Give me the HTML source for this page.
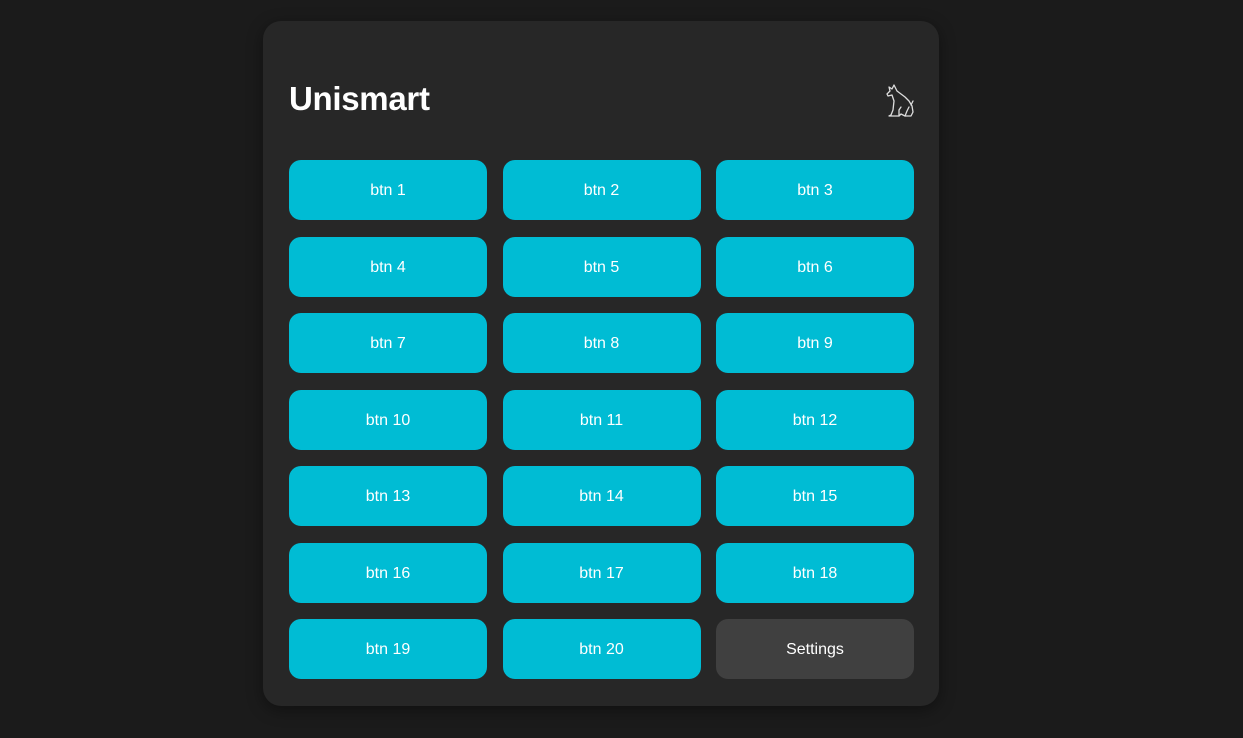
<!DOCTYPE html>
<html><head><style>
html,body{margin:0;padding:0;background:#1b1b1b;width:1243px;height:738px;overflow:hidden;font-family:"Liberation Sans",sans-serif}
.card{position:absolute;left:263px;top:21px;width:676px;height:685px;background:#272727;border-radius:18px;box-shadow:0 4px 16px rgba(0,0,0,.4)}
h1{position:absolute;left:26px;top:58px;margin:0;color:#fff;font-size:33px;line-height:40px;font-weight:bold;font-family:"Liberation Sans",sans-serif;letter-spacing:-0.3px}
.icon{position:absolute;left:620px;top:62px}
.grid{position:absolute;left:26px;top:139px;display:grid;grid-template-columns:198px 198px 198px;column-gap:15.5px;row-gap:16.5px}
.b{height:60px;box-sizing:border-box;padding-top:2px;background:#00bcd4;border-radius:12px;color:#fff;font-size:16px;display:flex;align-items:center;justify-content:center}
.s{background:#404040}
</style></head><body>
<div class="card">
<h1>Unismart</h1>
<svg class="icon" width="32" height="36" viewBox="0 0 32 36" fill="none" stroke="#ddd" stroke-width="1.3" stroke-linejoin="round" stroke-linecap="round">
<path d="M6 4 L7 8 L4 11 L5 13 L9 12 L11 18 L10 27 L8 32 L6 33 L16 33 L18 31 L22 33 L28 33 L30 29 L29 23 L26 18 L22 14 L14 8 L11 2 L9 6 Z"/>
<path d="M16 33 L16 27 L18 24"/>
<path d="M22 33 L24 28 L26 24"/>
<path d="M28 22 L30 18"/>
</svg>
<div class="grid">
<div class="b">btn 1</div><div class="b">btn 2</div><div class="b">btn 3</div>
<div class="b">btn 4</div><div class="b">btn 5</div><div class="b">btn 6</div>
<div class="b">btn 7</div><div class="b">btn 8</div><div class="b">btn 9</div>
<div class="b">btn 10</div><div class="b">btn 11</div><div class="b">btn 12</div>
<div class="b">btn 13</div><div class="b">btn 14</div><div class="b">btn 15</div>
<div class="b">btn 16</div><div class="b">btn 17</div><div class="b">btn 18</div>
<div class="b">btn 19</div><div class="b">btn 20</div><div class="b s">Settings</div>
</div>
</div>
</body></html>
